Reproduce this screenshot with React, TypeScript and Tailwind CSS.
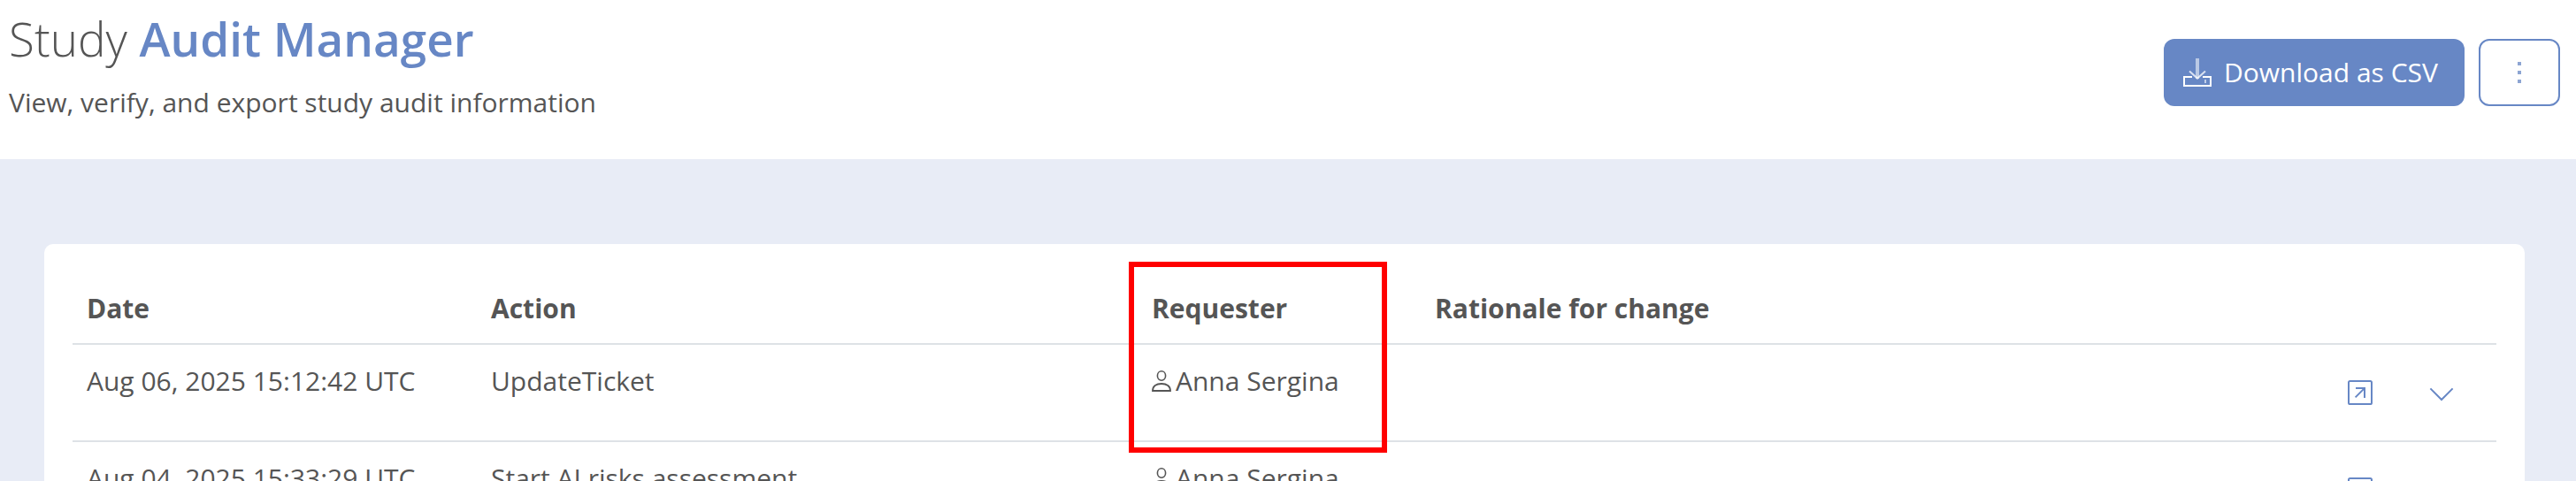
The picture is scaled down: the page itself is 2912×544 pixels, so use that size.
import { useState } from "react";

type AuditEvent = {
  id: number;
  date: string;
  action: string;
  requester: string;
  rationale: string;
};

const events: AuditEvent[] = [
  { id: 1, date: "Aug 06, 2025 15:12:42 UTC", action: "UpdateTicket", requester: "Anna Sergina", rationale: "" },
  { id: 2, date: "Aug 04, 2025 15:33:29 UTC", action: "Start AI risks assessment", requester: "Anna Sergina", rationale: "" },
];

function DownloadIcon() {
  return (
    <svg viewBox="0 0 16 16" className="size-8" fill="none" stroke="currentColor" aria-hidden="true">
      <path d="M5 10.5H0.5v5h15v-5H11" />
      <path d="M8 0v11.5" strokeWidth="2" opacity="0.55" />
      <path d="M3.500 7.200L8 11.300l4.500-4.100" opacity="0.75" />
      <path d="M12.500 12v2" opacity="0.6" />
    </svg>
  );
}

function PersonIcon() {
  return (
    <svg viewBox="0 0 11 12" className="h-6 w-[22px]" fill="none" stroke="currentColor" aria-hidden="true">
      <ellipse cx="5.5" cy="3" rx="2.3" ry="2.6" strokeWidth="0.8" />
      <path d="M0.500 11.500c0-2.600 2-4 5-4s5 1.400 5 4z" strokeWidth="0.9" />
    </svg>
  );
}

function OpenIcon() {
  return (
    <svg viewBox="0 0 14 14" className="size-7" fill="none" stroke="currentColor" aria-hidden="true">
      <rect x="0.5" y="0.5" width="13" height="13" rx="0.8" />
      <path d="M4.300 9.700l5-5M4.500 4.500h5V10" />
    </svg>
  );
}

function ChevronIcon() {
  return (
    <svg viewBox="0 0 14 14" className="size-7" fill="none" stroke="currentColor" aria-hidden="true">
      <path d="M0.700 4.700L7 11l6.300-6.300" />
    </svg>
  );
}

export default function App() {
  const [expanded, setExpanded] = useState<number | null>(null);

  return (
    <div className="h-screen overflow-hidden bg-[#e8ecf6] font-['Open_Sans',sans-serif] text-[30px] leading-[48px] text-[#555]">
      {/* Page header */}
      <header className="flex h-[180px] items-start justify-between bg-white pr-[18px] pl-[10px]">
        <div className="pt-2">
          <h1 className="text-[53px] leading-[72px] font-light">
            Study <strong className="font-semibold text-[#6787c5]">Audit Manager</strong>
          </h1>
          <p className="pt-3">View, verify, and export study audit information</p>
        </div>
        <div className="flex gap-4 pt-11">
          <button className="flex h-[76px] w-[340px] items-center gap-[14px] rounded-[12px] bg-[#6787c5] pl-[22px] whitespace-nowrap text-white">
            <DownloadIcon />
            Download as CSV
          </button>
          <button aria-label="More options" className="flex h-[76px] w-[92px] items-center justify-center rounded-[12px] border-2 border-[#6787c5] text-[#6787c5]">
            <svg viewBox="0 0 4 24" className="h-6 w-1" fill="currentColor" opacity="0.75" aria-hidden="true">
              <path d="M0 0h4v4H0zM0 10h4v4H0zM0 20h4v4H0z" />
            </svg>
          </button>
        </div>
      </header>

      {/* Audit log */}
      <main className="pt-24 pr-[58px] pl-[50px]">
        <div className="rounded-[10px] bg-white px-8 pt-10">
          <table className="w-full table-fixed text-left">
            <thead>
              <tr className="h-[73px] border-b-2 border-[#dee2e6] align-top">
                <th className="w-[457px] px-4 pt-[9px] font-bold">Date</th>
                <th className="w-[747px] px-4 pt-[9px] font-bold">Action</th>
                <th className="relative w-[320px] px-4 pt-[9px] font-bold">
                  Requester
                  <div className="pointer-events-none absolute -top-5 -left-[10px] h-[216px] w-[292px] border-[6px] border-[#ff0000]" />
                </th>
                <th className="px-4 pt-[9px] font-bold">Rationale for change</th>
                <th className="w-[200px]" aria-label="Row actions" />
              </tr>
            </thead>
            <tbody>
              {events.map((e) => (
                <tr key={e.id} className="h-[110px] border-b-2 border-[#dee2e6] align-top">
                  <td className="px-4 pt-[17px]">{e.date}</td>
                  <td className="px-4 pt-[17px]">{e.action}</td>
                  <td className="px-4 pt-[17px]">
                    <span className="flex items-center gap-[5px]">
                      <PersonIcon />
                      {e.requester}
                    </span>
                  </td>
                  <td className="px-4 pt-[17px]">{e.rationale}</td>
                  <td className="pt-10">
                    <div className="flex justify-end gap-16 pr-12 text-[#6787c5]">
                      <button aria-label="Open record">
                        <OpenIcon />
                      </button>
                      <button
                        aria-label="Show details"
                        aria-expanded={expanded === e.id}
                        onClick={() => setExpanded(expanded === e.id ? null : e.id)}
                      >
                        <ChevronIcon />
                      </button>
                    </div>
                  </td>
                </tr>
              ))}
            </tbody>
          </table>
        </div>
      </main>
    </div>
  );
}
